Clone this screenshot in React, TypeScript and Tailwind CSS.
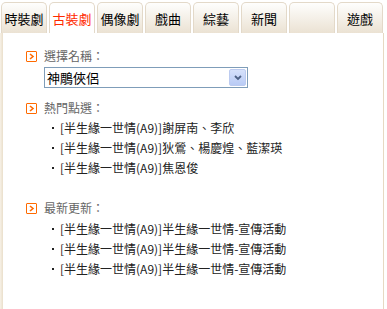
import React from "react";

const tabs = ["時裝劇", "古裝劇", "偶像劇", "戲曲", "綜藝", "新聞", "", "遊戲"];

function Icon() {
  return (
    <span className="w-[11px] h-[11px] border-[1.5px] border-[#ff6a00] rounded-[1px] flex items-center justify-center mr-[7px] bg-white">
      <svg width="7" height="7" viewBox="0 0 7 7">
        <path d="M2 1 L5 3.5 L2 6" stroke="#ff6a00" strokeWidth="1.6" fill="none" />
      </svg>
    </span>
  );
}

function Item({ text }: { text: string }) {
  return (
    <div className="h-[20px] flex items-center pl-[44px] text-[#222]">
      <span className="w-[12px] flex justify-center">
        <span className="w-[2px] h-[2px] bg-[#222]" />
      </span>
      <span className="ml-[1px]">{text}</span>
    </div>
  );
}

export default function App() {
  return (
    <div
      className="w-[387px] h-[309px] bg-white overflow-hidden text-[12px]"
      style={{ fontFamily: '"Noto Sans CJK TC", "Liberation Sans", sans-serif' }}
    >
      <div className="flex gap-[2px] pl-[1px] pt-[2px] h-[33px]">
        {tabs.map((t, i) => (
          <div
            key={i}
            className={
              "w-[46px] h-[31px] rounded-t-[5px] border border-b-0 border-[#e3d9c9] flex items-center justify-center text-[13px] leading-none " +
              (i === 1
                ? "bg-white text-[#ff2a00]"
                : "bg-gradient-to-b from-[#fefefd] to-[#ebe2d3] text-black")
            }
          >
            {t}
          </div>
        ))}
      </div>
      <div className="flex h-[276px]">
        <div className="w-[3px] bg-gradient-to-r from-[#f7f1e7] to-[#eadfcb]" />
        <div className="w-[380px] flex flex-col pt-[13px] pl-[23px] leading-none">
          <div className="h-[20px] flex items-center text-[#666]">
            <Icon />
            <span>選擇名稱：</span>
          </div>
          <div className="ml-[18px] mt-[1px] w-[204px] h-[21px] border border-[#7f9db9] flex items-center justify-between">
            <span className="text-[13px] text-black pl-[2px]">神鵰俠侶</span>
            <span className="w-[17px] h-[17px] mr-[1px] rounded-[2px] border border-[#bccbf0] bg-gradient-to-b from-[#d6e1fb] to-[#b9cbf5] flex items-center justify-center">
              <svg width="8" height="6" viewBox="0 0 8 6">
                <path d="M1 1 L4 4 L7 1" stroke="#4d6185" strokeWidth="1.8" fill="none" />
              </svg>
            </span>
          </div>
          <div className="h-[20px] mt-[10px] flex items-center text-[#666]">
            <Icon />
            <span>熱門點選：</span>
          </div>
          <div className="-ml-[23px]">
            <Item text="[半生緣一世情(A9)]謝屏南、李欣" />
            <Item text="[半生緣一世情(A9)]狄鶯、楊慶煌、藍潔瑛" />
            <Item text="[半生緣一世情(A9)]焦恩俊" />
          </div>
          <div className="h-[20px] mt-[20px] flex items-center text-[#666]">
            <Icon />
            <span>最新更新：</span>
          </div>
          <div className="-ml-[23px] mt-[1px]">
            <Item text="[半生緣一世情(A9)]半生緣一世情-宣傳活動" />
            <Item text="[半生緣一世情(A9)]半生緣一世情-宣傳活動" />
            <Item text="[半生緣一世情(A9)]半生緣一世情-宣傳活動" />
          </div>
        </div>
        <div className="w-[1px] bg-[#e6d9c2]" />
      </div>
    </div>
  );
}
